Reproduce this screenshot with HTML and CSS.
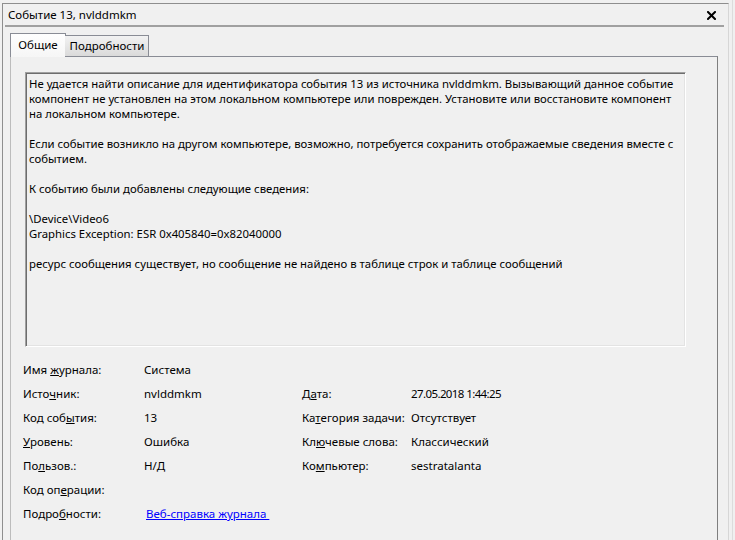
FILE: index.html
```html
<!DOCTYPE html>
<html lang="ru">
<head>
<meta charset="utf-8">
<title>Событие 13, nvlddmkm</title>
<link rel="stylesheet" href="styles.css">
</head>
<body>
<div class="frame">
  <div class="pane">
    <div class="titlebar">
      <span class="title">Событие 13, nvlddmkm</span>
      <svg class="close" width="9" height="9" viewBox="0 0 9 9" aria-label="Закрыть">
        <path d="M1 1 L8 8 M8 1 L1 8" stroke="#000" stroke-width="2" stroke-linecap="square"/>
      </svg>
    </div>
    <div class="tabs">
      <div class="tab active">Общие</div>
      <div class="tab">Подробности</div>
    </div>
    <div class="panel">
      <div class="desc">
        <p>Не удается найти описание для идентификатора события 13 из источника nvlddmkm. Вызывающий данное событие<br>компонент не установлен на этом локальном компьютере или поврежден. Установите или восстановите компонент<br>на локальном компьютере.</p>
        <p>Если событие возникло на другом компьютере, возможно, потребуется сохранить отображаемые сведения вместе с<br>событием.</p>
        <p>К событию были добавлены следующие сведения:</p>
        <p>\Device\Video6<br>Graphics Exception: ESR 0x405840=0x82040000</p>
        <p>ресурс сообщения существует, но сообщение не найдено в таблице строк и таблице сообщений</p>
      </div>
      <div class="fields">
        <div class="lbl">Имя <u>ж</u>урнала:</div><div class="val">Система</div><div></div><div></div>
        <div class="lbl">Исто<u>ч</u>ник:</div><div class="val">nvlddmkm</div><div class="lbl">Д<u>а</u>та:</div><div class="val date">27.05.2018 1:44:25</div>
        <div class="lbl">Код соб<u>ы</u>тия:</div><div class="val">13</div><div class="lbl">Ка<u>т</u>егория задачи:</div><div class="val">Отсутствует</div>
        <div class="lbl"><u>У</u>ровень:</div><div class="val">Ошибка</div><div class="lbl">Кл<u>ю</u>чевые слова:</div><div class="val">Классический</div>
        <div class="lbl">По<u>л</u>ьзов.:</div><div class="val">Н/Д</div><div class="lbl">Ко<u>м</u>пьютер:</div><div class="val">sestratalanta</div>
        <div class="lbl">Код оп<u>е</u>рации:</div><div class="val"></div><div></div><div></div>
        <div class="lbl">Подро<u>б</u>ности:</div><div class="val"><a class="link" href="#">Веб-справка журнала </a></div><div></div><div></div>
      </div>
    </div>
  </div>
</div>
</body>
</html>
```
FILE: styles.css
```css
html, body {
  margin: 0;
  padding: 0;
  background: #f0f0f0;
}
body {
  font-family: "Noto Sans", "Liberation Sans", sans-serif;
  font-size: 11.5px;
  color: #000;
  height: 540px;
  overflow: hidden;
}
.frame {
  margin-left: 2px;
  width: 730px;
  padding-top: 3px;
  height: 537px;
  border-right: 1px solid #dcdcdc;
  box-sizing: content-box;
  overflow: hidden;
}
.pane {
  width: 725px;
  height: 536px;
  border-top: 1px solid #8e8e8e;
  border-left: 1px solid #8e8e8e;
  border-right: 1px solid #d6d6d6;
  box-sizing: content-box;
  overflow: hidden;
}
.titlebar {
  margin: 0 4px 0 2px;
  height: 21px;
  border-bottom: 2px solid #a0a0a0;
  display: flex;
  align-items: center;
  justify-content: space-between;
  padding: 0 8px 0 3px;
}
.title {
  line-height: 21px;
}
.close {
  display: block;
  margin-top: 1px;
}
.tabs {
  display: flex;
  align-items: flex-end;
  margin: 6px 0 0 7px;
  height: 23px;
  position: relative;
  z-index: 1;
}
.tab {
  box-sizing: border-box;
  border: 1px solid #898c95;
  border-bottom: none;
  text-align: center;
  line-height: 19px;
}
.tab.active {
  width: 56px;
  height: 24px;
  margin-bottom: -1px;
  background: linear-gradient(#fefefe, #f6f6f6);
  line-height: 21px;
}
.tab:not(.active) {
  width: 84px;
  height: 21px;
  margin-left: -1px;
  border-left: none;
  background: linear-gradient(#f2f2f2, #dadada);
  padding-left: 1px;
}
.panel {
  margin-left: 7px;
  width: 708px;
  box-sizing: border-box;
  height: 484px;
  border-top: 1px solid #898c95;
  border-left: 1px solid #bcbcbc;
  border-right: 1px solid #7f7f7f;
  padding: 15px 0 0 12px;
}
.desc {
  margin-left: 2px;
  width: 661px;
  height: 275px;
  box-sizing: border-box;
  border-top: 1px solid #a0a0a0;
  border-left: 1px solid #a0a0a0;
  border-right: 1px solid #ffffff;
  border-bottom: 1px solid #ffffff;
  box-shadow: inset 1px 1px 0 #6d6d6d, inset -1px -1px 0 #e3e3e3;
  padding: 3px 0 0 3px;
  font-size: 11.35px;
  line-height: 15px;
  white-space: nowrap;
  overflow: hidden;
}
.desc p {
  margin: 0 0 15px 0;
}
.fields {
  margin-top: 11px;
  display: grid;
  grid-template-columns: 121px 158px 109px auto;
  grid-auto-rows: 24px;
  line-height: 24px;
}
.date {
  letter-spacing: -0.6px;
}
.link {
  color: #0000ff;
  text-decoration: underline;
  padding-left: 2px;
  white-space: pre;
}
```
